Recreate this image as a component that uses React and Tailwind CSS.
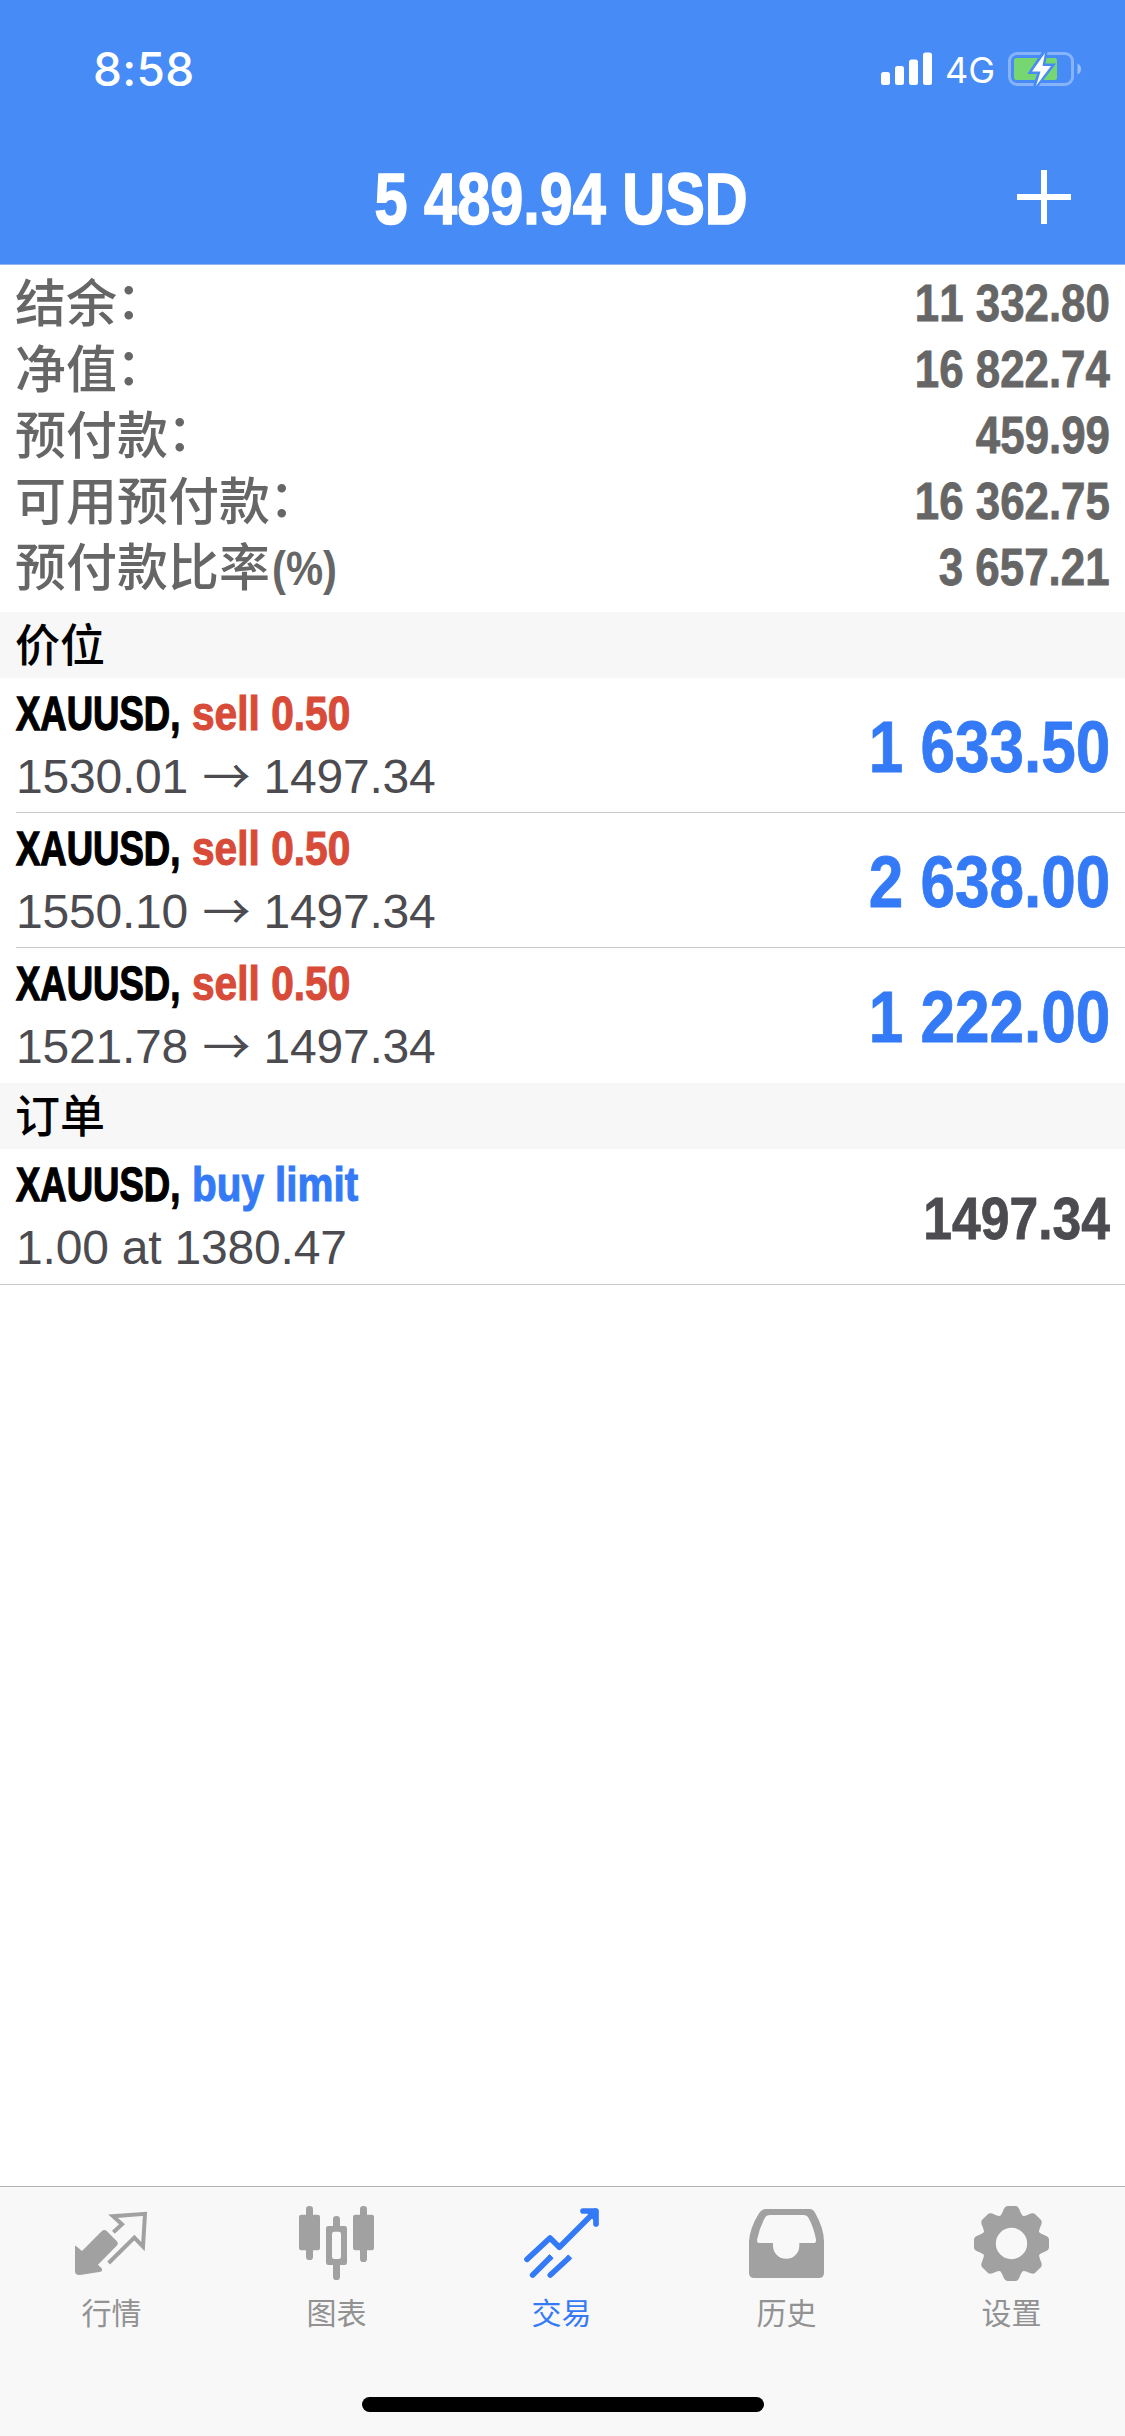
const SANS = "font-['Liberation_Sans',Arial,sans-serif] [font-kerning:none]";
const CJK = "font-['Liberation_Sans','Noto_Sans_CJK_SC',sans-serif]";
const INTER = "font-['Inter',sans-serif]";

const summary = [
  { label: "结余", suffix: "：", value: "11 332.80" },
  { label: "净值", suffix: "：", value: "16 822.74" },
  { label: "预付款", suffix: "：", value: "459.99" },
  { label: "可用预付款", suffix: "：", value: "16 362.75" },
  { label: "预付款比率", suffix: "(%)", value: "3 657.21" },
];

const positions = [
  { from: "1530.01", to: "1497.34", profit: "1 633.50" },
  { from: "1550.10", to: "1497.34", profit: "2 638.00" },
  { from: "1521.78", to: "1497.34", profit: "1 222.00" },
];

function StatusBar() {
  return (
    <div className="flex h-[132px] items-center justify-between pt-[6px] pl-[93px] pr-[43px] text-white">
      <span className={`${INTER} text-[46px] font-medium leading-none tracking-[0.3px]`}>8:58</span>
      <div className="flex items-center">
        <svg width="52" height="34" viewBox="0 0 52 34" fill="#fff">
          <rect x="0" y="20" width="9" height="13" rx="2.5" />
          <rect x="14" y="14" width="9" height="19" rx="2.5" />
          <rect x="28" y="7.500" width="9" height="25.500" rx="2.5" />
          <rect x="42" y="0.500" width="9" height="32.500" rx="2.5" />
        </svg>
        <span className={`${INTER} ml-[12px] w-[63px] pt-[2px] text-[36px] leading-none`}>4G</span>
        <svg width="74" height="34" viewBox="0 0 74 34">
          <rect x="1.500" y="1.500" width="63" height="31" rx="7.500" fill="none" stroke="#fff" strokeOpacity="0.35" strokeWidth="3" />
          <path d="M69.500 11.500Q73 13 73 17T69.500 22.500Z" fill="#fff" fillOpacity="0.45" />
          <rect x="6" y="6" width="43" height="22" rx="2.5" fill="#76d672" />
          <path d="M37 0 24 19.500H32.500L27.500 34 43 14H34.500Z" fill="#468bf6" stroke="#468bf6" strokeWidth="5" />
          <path d="M37 1 24 19.500H32.500L28 34 43 14H34.500Z" fill="#fff" />
        </svg>
      </div>
    </div>
  );
}

function Header() {
  return (
    <header className="border-b border-[#8fb4e8] bg-[#468bf6]">
      <StatusBar />
      <div className="grid h-[132px] grid-cols-[1fr_auto_1fr] items-center">
        <span />
        <h1
          className={`${SANS} mr-[2px] scale-x-[0.825] pt-[3px] text-[72px] font-bold leading-[129px] whitespace-nowrap text-white [-webkit-text-stroke:1.6px_#fff]`}
        >
          5 489.94 USD
        </h1>
        <svg className="mr-[54px] mb-[2px] justify-self-end" width="54" height="54" viewBox="0 0 54 54">
          <path d="M27 0V54M0 27H54" stroke="#fff" strokeWidth="6" />
        </svg>
      </div>
    </header>
  );
}

function SectionTitle({ children }) {
  return (
    <h2 className={`${CJK} h-[66px] bg-[#f7f7f7] pl-[15px] text-[45px] font-medium leading-[69px] text-black`}>
      {children}
    </h2>
  );
}

function RowTitle({ action, actionClass }) {
  return (
    <div className={`${SANS} flex text-[49px] font-bold leading-[70px] whitespace-nowrap`}>
      <span className="w-[176px]">
        <span className="inline-block origin-left scale-x-[0.745] text-black [-webkit-text-stroke:1.3px_#000]">
          XAUUSD,
        </span>
      </span>
      <span className={`inline-block origin-left ${actionClass}`}>{action}</span>
    </div>
  );
}

function PositionRow({ from, to, profit, divider }) {
  return (
    <div className="pl-[16px]">
      <div className={`flex h-[135px] justify-between pr-[15px] ${divider ? "border-b border-[#c8c7cc]" : ""}`}>
        <div>
          <RowTitle
            action="sell 0.50"
            actionClass="scale-x-[0.83] text-[#d74b38] [-webkit-text-stroke:1.1px_#d74b38]"
          />
          <div className={`${SANS} flex text-[48px] leading-[57px] tracking-[-0.2px] text-[#4b4b50]`}>
            <span className="w-[173.5px]">{from}</span>
            <span className="w-[74px] text-center font-['Noto_Sans_CJK_SC',sans-serif] leading-[50px]">→</span>
            <span>{to}</span>
          </div>
        </div>
        <span
          className={`${SANS} origin-right scale-x-[0.862] text-[72px] font-bold leading-[138px] whitespace-nowrap text-[#347af6] [-webkit-text-stroke:0.8px_#347af6]`}
        >
          {profit}
        </span>
      </div>
    </div>
  );
}

function OrderRow() {
  return (
    <div className="flex h-[136px] justify-between border-b border-[#c8c7cc] pr-[15px] pl-[16px]">
      <div>
        <RowTitle
          action="buy limit"
          actionClass="scale-x-[0.825] text-[#347af6] [-webkit-text-stroke:1.1px_#347af6]"
        />
        <div className={`${SANS} text-[48px] leading-[57px] tracking-[-0.2px] text-[#4b4b50]`}>1.00 at 1380.47</div>
      </div>
      <span
        className={`${SANS} origin-right scale-x-[0.86] text-[60px] font-bold leading-[139px] text-[#4b4b50] [-webkit-text-stroke:0.8px_#4b4b50]`}
      >
        1497.34
      </span>
    </div>
  );
}

const QuotesIcon = () => (
  <svg width="75" height="75" viewBox="105 108 225 225" overflow="visible">
    <path d="M105 228Q106 226 109 229L126 243 185 184Q193 176 201 184L230 213Q237 220 230 227L174 284 186 296Q188 303 182 305L120 315Q105 316 105 303Z" fill="#a1a1a1" />
    <path d="M220 187 246 163 219 138.500 315 131.500 309 230 283 203 206 279" fill="none" stroke="#a1a1a1" strokeWidth="12" />
  </svg>
);

const ChartIcon = () => (
  <svg width="75" height="75" viewBox="780 108 225 225" overflow="visible" fill="#a1a1a1">
    <rect x="798" y="108" width="21" height="162" rx="10" />
    <rect x="777" y="134" width="63" height="107" rx="7" />
    <rect x="960" y="108" width="21" height="168" rx="10" />
    <rect x="939" y="134" width="63" height="107" rx="7" />
    <rect x="879" y="138" width="21" height="45" rx="10" />
    <rect x="879" y="270" width="21" height="60" rx="10" />
    <path fillRule="evenodd" d="M865 168H914Q921 168 921 175V278Q921 285 914 285H865Q858 285 858 278V175Q858 168 865 168ZM883 185Q876 185 876 192V260Q876 267 883 267H896Q903 267 903 260V192Q903 185 896 185Z" />
  </svg>
);

const TradeIcon = () => (
  <svg width="75" height="75" viewBox="105 108 225 225" overflow="visible" fill="none" stroke="#347af6" strokeWidth="17">
    <path d="M111 268 180 204 208 232 316 124" strokeLinejoin="round" strokeLinecap="round" />
    <path d="M279 123H318V162" strokeLinecap="round" strokeLinejoin="round" />
    <path d="M290 128H312V152Z" fill="#347af6" stroke="none" />
    <path d="M128 315 177 266M181 315 233 267" strokeLinecap="round" />
    <path d="M173 259 179 254 189 264 184 271M229 260 235 255 245 265 239 272" strokeWidth="3" strokeLinejoin="round" fill="#347af6" />
  </svg>
);

const HistoryIcon = () => (
  <svg width="75" height="75" viewBox="780 108 225 225" overflow="visible">
    <path
      fill="#a1a1a1"
      fillRule="evenodd"
      d="M828 117H960Q969 117 974 126Q1002 175 1002 215V308Q1002 324 986 324H793Q777 324 777 308V215Q779 175 807 130Q814 117 828 117ZM840 135Q829 135 824 145Q808 175 801 209Q801 219 808 219H849V227A39.500 39.500 0 0 0 928 227V219H972Q979 219 978 208Q970 170 956 145Q951 135 940 135Z"
    />
  </svg>
);

const TEETH = [0, 45, 90, 135, 180, 225, 270, 315];

const SettingsIcon = () => (
  <svg width="75" height="75" viewBox="225 108 225 225" overflow="visible">
    <g transform="translate(334.500 220.500)">
      <circle r="67.500" fill="none" stroke="#a1a1a1" strokeWidth="41" />
      {TEETH.map((a) => (
        <path
          key={a}
          transform={`rotate(${a})`}
          fill="#a1a1a1"
          d="M-40 -78Q-30 -84 -26 -96Q-21 -112 -12 -112.500H12Q21 -112 26 -96Q30 -84 40 -78Z"
        />
      ))}
    </g>
  </svg>
);

const tabs = [
  { label: "行情", Icon: QuotesIcon },
  { label: "图表", Icon: ChartIcon },
  { label: "交易", Icon: TradeIcon, active: true },
  { label: "历史", Icon: HistoryIcon },
  { label: "设置", Icon: SettingsIcon },
];

function TabBar() {
  return (
    <nav className="mt-auto flex h-[250px] flex-col items-center border-t border-[#b2b2b2] bg-[#f8f8f8] pt-[19px]">
      <div className="grid w-full grid-cols-5">
        {tabs.map(({ label, Icon, active }) => (
          <div key={label} className="flex flex-col items-center">
            <Icon />
            <span className={`${CJK} mr-[2px] text-[30px] leading-[66px] ${active ? "text-[#347af6]" : "text-[#929292]"}`}>
              {label}
            </span>
          </div>
        ))}
      </div>
      <div className="mt-[50px] h-[15px] w-[402px] rounded-full bg-black" />
    </nav>
  );
}

export default function App() {
  return (
    <div className="flex h-[2436px] w-[1125px] flex-col overflow-hidden bg-white">
      <Header />
      <div className="px-[15px] pt-[5px] pb-[12px] text-[#666]">
        {summary.map(({ label, suffix, value }) => (
          <div key={label} className="flex h-[66px] items-start justify-between">
            <div className="flex items-start">
              <span className={`${CJK} text-[51px] font-medium leading-[69px]`}>{label}</span>
              {suffix === "：" ? (
                <span className={`${CJK} -ml-[1px] text-[51px] font-medium leading-[64px]`}>{suffix}</span>
              ) : (
                <span className={`${SANS} ml-[2px] origin-left scale-x-[0.87] text-[48px] font-bold leading-[70px]`}>
                  {suffix}
                </span>
              )}
            </div>
            <span
              className={`${SANS} origin-right scale-x-[0.86] text-[51px] font-bold leading-[68px] [-webkit-text-stroke:0.8px_#666]`}
            >
              {value}
            </span>
          </div>
        ))}
      </div>
      <SectionTitle>价位</SectionTitle>
      {positions.map((p, i) => (
        <PositionRow key={p.from} {...p} divider={i < positions.length - 1} />
      ))}
      <SectionTitle>订单</SectionTitle>
      <OrderRow />
      <TabBar />
    </div>
  );
}
